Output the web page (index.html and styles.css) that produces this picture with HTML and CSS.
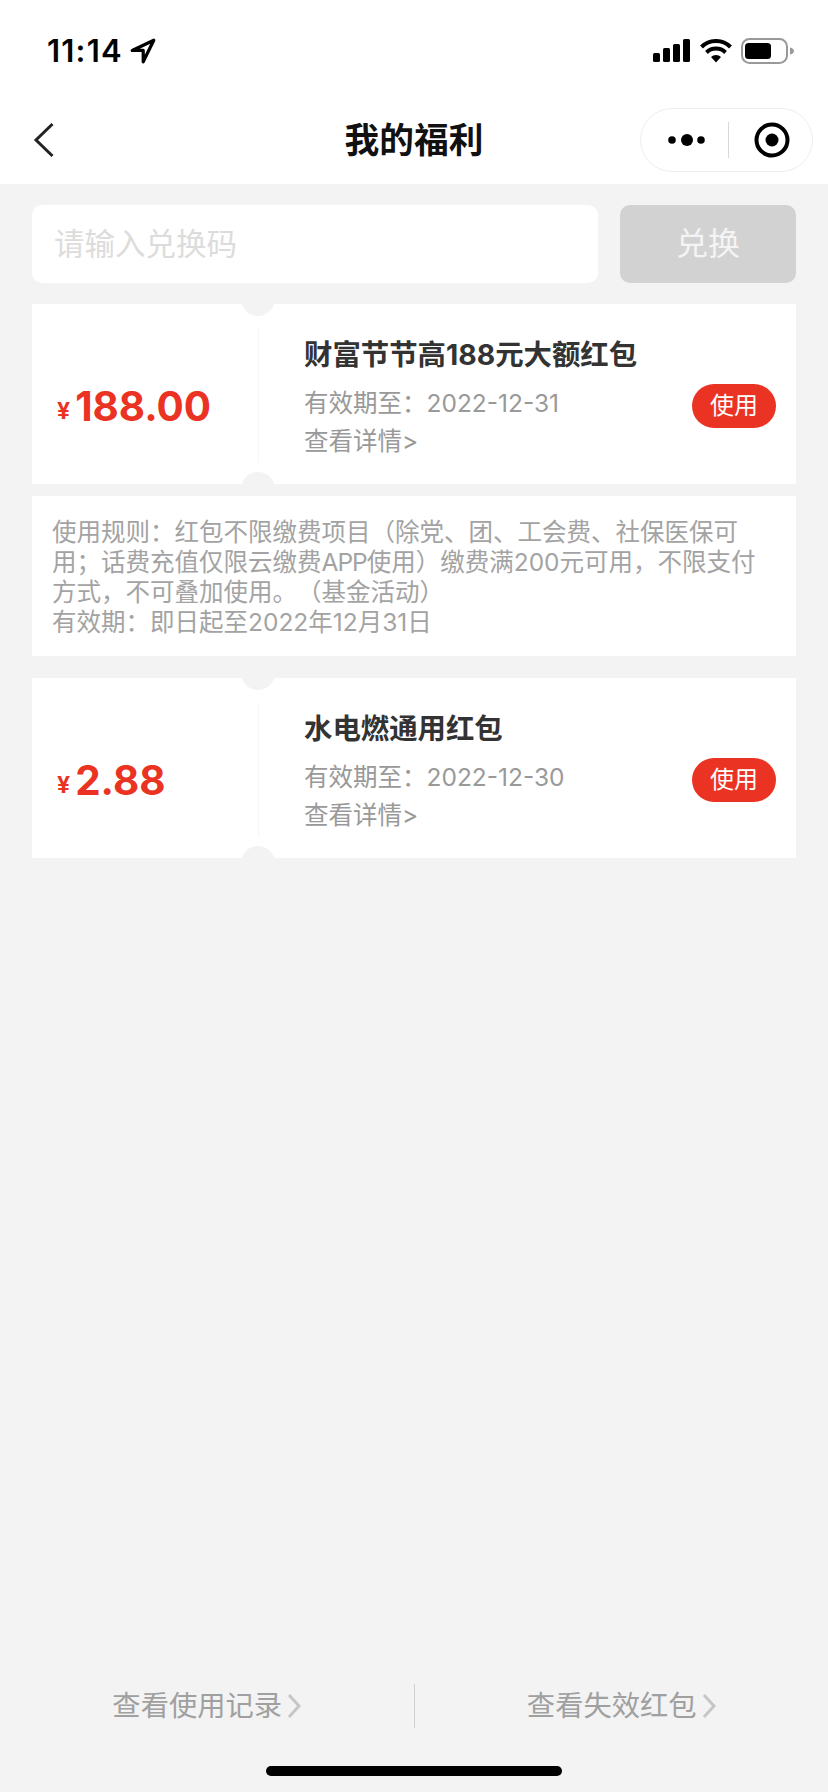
FILE: index.html
```html
<!DOCTYPE html>
<html lang="zh-CN">
<head>
<meta charset="utf-8">
<title>我的福利</title>
<link rel="stylesheet" href="styles.css">
</head>
<body>
<div class="page">
  <header class="top">
    <div class="status">
      <div class="time">11:14
        <svg class="loc" width="28" height="28" viewBox="0 0 26 26"><path d="M23 3 3 12.500h10.200V23z" fill="none" stroke="#000" stroke-width="3" stroke-linejoin="round"/></svg>
      </div>
      <div class="sys">
        <svg width="38" height="24" viewBox="0 0 38 24"><rect x="0" y="14" width="7" height="9" rx="1.500"/><rect x="10" y="9" width="7" height="14" rx="1.500"/><rect x="20" y="5" width="7" height="18" rx="1.500"/><rect x="30" y="0" width="7" height="23" rx="1.500"/></svg>
        <svg width="32" height="24" viewBox="0 0 32 24"><path d="M16 23.500 11 18a7 7 0 0 1 10 0z"/><path d="M6.500 13.500a13.500 13.500 0 0 1 19 0" fill="none" stroke="#000" stroke-width="4"/><path d="M1.500 8a20.500 20.500 0 0 1 29 0" fill="none" stroke="#000" stroke-width="4"/></svg>
        <svg width="54" height="26" viewBox="0 0 54 26"><rect x="1" y="1" width="45" height="24" rx="7.500" fill="none" stroke="#999" stroke-width="2"/><rect x="4" y="5" width="26" height="16" rx="3.500"/><path d="M49 9.500c2.500.5 4 2 4 3.500s-1.500 3-4 3.500z" fill="#999"/></svg>
      </div>
    </div>
    <nav class="nav">
      <svg class="back" width="22" height="36" viewBox="0 0 22 36"><path d="M19.500 2 3 18l16.500 16" fill="none" stroke="#222" stroke-width="3"/></svg>
      <h1 class="title">我的福利</h1>
      <div class="capsule">
        <svg class="more" width="42" height="16" viewBox="0 0 42 16"><circle cx="5" cy="8" r="3.800"/><circle cx="20" cy="8" r="6"/><circle cx="34" cy="8" r="3.800"/></svg>
        <span class="capsule-line"></span>
        <svg class="rec" width="38" height="38" viewBox="0 0 38 38"><circle cx="19" cy="19" r="15.500" fill="none" stroke="#000" stroke-width="4"/><circle cx="19" cy="19" r="6.500"/></svg>
      </div>
    </nav>
  </header>

  <main class="main">
    <div class="redeem">
      <div class="code-input">请输入兑换码</div>
      <div class="code-btn">兑换</div>
    </div>

    <section class="coupon">
      <div class="amount"><span class="yen">¥</span><span class="num">188.00</span></div>
      <span class="split"></span>
      <div class="info">
        <div class="name">财富节节高188元大额红包</div>
        <div class="meta date">有效期至：2022-12-31</div>
        <div class="meta">查看详情&gt;</div>
      </div>
      <div class="use">使用</div>
    </section>
    <section class="rules">
      <p>使用规则：红包不限缴费项目（除党、团、工会费、社保医保可</p>
      <p>用；话费充值仅限云缴费<span class="latin">APP</span>使用）缴费满200元可用，不限支付</p>
      <p>方式，不可叠加使用。（基金活动）</p>
      <p>有效期：即日起至2022年12月31日</p>
    </section>

    <section class="coupon">
      <div class="amount"><span class="yen">¥</span><span class="num">2.88</span></div>
      <span class="split"></span>
      <div class="info">
        <div class="name">水电燃通用红包</div>
        <div class="meta date">有效期至：2022-12-30</div>
        <div class="meta">查看详情&gt;</div>
      </div>
      <div class="use">使用</div>
    </section>
  </main>

  <footer class="foot">
    <div class="links">
      <div class="link">查看使用记录<svg width="14" height="26" viewBox="0 0 14 26"><path d="M2 2l10 11L2 24" fill="none" stroke="#c6c6c6" stroke-width="3"/></svg></div>
      <span class="links-line"></span>
      <div class="link">查看失效红包<svg width="14" height="26" viewBox="0 0 14 26"><path d="M2 2l10 11L2 24" fill="none" stroke="#c6c6c6" stroke-width="3"/></svg></div>
    </div>
    <div class="home"></div>
  </footer>
</div>
</body>
</html>
```
FILE: styles.css
```css
* { box-sizing: border-box; margin: 0; padding: 0; }
html, body { background: #f3f3f3; }
body { font-family: "Inter", "Noto Sans CJK SC", sans-serif; text-spacing-trim: space-all; }
.page { width: 828px; height: 1792px; display: flex; flex-direction: column; overflow: hidden; }

.top { background: #fff; height: 184px; flex: none; }
.status { height: 88px; display: flex; justify-content: space-between; align-items: flex-start; padding: 36px 33px 0 47px; }
.time { display: flex; align-items: center; gap: 6px; font-size: 31px; line-height: 30px; font-weight: 600; color: #000; letter-spacing: 1.2px; }
.sys { display: flex; align-items: center; gap: 9px; height: 30px; }
.nav { height: 96px; display: flex; align-items: center; justify-content: space-between; padding: 8px 15px 0 33px; position: relative; }
.back { flex: none; }
.title { position: absolute; left: 0; right: 0; top: 30px; text-align: center; font-size: 34.700px; line-height: 44px; font-weight: 700; color: #111; }
.capsule { width: 173px; height: 64px; border: 1px solid #eeeeee; border-radius: 32px; display: flex; align-items: center; padding-left: 26px; position: relative; background: #fff; }
.more { flex: none; }
.capsule-line { width: 1px; height: 36px; background: #d8d8d8; margin-left: 19px; flex: none; }
.rec { flex: none; margin-left: 24px; }

.main { padding: 21px 32px 0; flex: none; }
.redeem { display: flex; justify-content: space-between; margin-bottom: 21px; }
.code-input { width: 566px; height: 78px; background: #fff; border-radius: 10px; padding-left: 22px; font-size: 30.500px; line-height: 78px; color: #dcdcdc; }
.code-btn { width: 176px; height: 78px; background: #d2d2d2; border-radius: 10px; text-align: center; font-size: 32px; line-height: 78px; color: #f4f4f4; }

.coupon { height: 180px; background: #fff; display: flex; align-items: stretch; position: relative; overflow: hidden; }
.coupon::before, .coupon::after { content: ""; position: absolute; left: 209px; width: 34px; height: 34px; border-radius: 50%; background: #f3f3f3; }
.coupon::before { top: -22px; }
.coupon::after { bottom: -22px; }
.amount { width: 226px; flex: none; padding: 25px 0 0 25px; display: flex; align-items: center; color: #ea3323; font-weight: 700; }
.yen { font-size: 23px; margin: 9px 5px 0 0; }
.num { font-size: 40.400px; line-height: 50px; }
.split { width: 1px; flex: none; background: #f6f6f6; margin: 24px 0 21px; }
.info { flex: 1; padding: 32px 0 0 45px; min-width: 0; }
.name { font-size: 28.400px; line-height: 38px; font-weight: 700; color: #333; }
.meta { font-size: 24.500px; line-height: 38px; color: #999; }
.date { margin-top: 9.500px; }
.use { align-self: flex-start; flex: none; width: 84px; height: 44px; margin: 80px 20px 0 0; background: #ea3323; border-radius: 22px; color: #fff; text-align: center; font-size: 24px; line-height: 43px; }

.rules { margin: 12px 0 22px; height: 160px; background: #fff; padding: 21px 20px 0; font-size: 24.500px; line-height: 30px; color: #a3a3a3; white-space: nowrap; }
.latin { letter-spacing: -1px; }

.foot { margin-top: auto; flex: none; height: 124px; display: flex; flex-direction: column; align-items: center; }
.links { width: 100%; height: 44px; display: flex; align-items: center; margin-top: 16px; }
.link { flex: 1; display: flex; align-items: center; justify-content: center; gap: 5px; font-size: 28.300px; line-height: 44px; color: #a0a0a0; }
.links-line { width: 1px; height: 44px; background: #cfcfcf; flex: none; }
.home { width: 296px; height: 10px; background: #000; border-radius: 5px; margin-top: 38px; }
```
